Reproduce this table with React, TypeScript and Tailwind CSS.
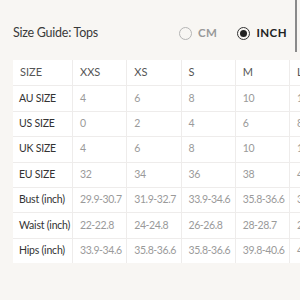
import { Fragment } from 'react'

const HEAD = ['SIZE', 'XXS', 'XS', 'S', 'M', 'L']

const ROWS: [string, string[]][] = [
  ['AU SIZE', ['4', '6', '8', '10', '12']],
  ['US SIZE', ['0', '2', '4', '6', '8']],
  ['UK SIZE', ['4', '6', '8', '10', '12']],
  ['EU SIZE', ['32', '34', '36', '38', '40']],
  ['Bust (inch)', ['29.9-30.7', '31.9-32.7', '33.9-34.6', '35.8-36.6', '37.8-38.6']],
  ['Waist (inch)', ['22-22.8', '24-24.8', '26-26.8', '28-28.7', '29.9-30.7']],
  ['Hips (inch)', ['33.9-34.6', '35.8-36.6', '35.8-36.6', '39.8-40.6', '41.7-42.5']],
]

function Radio({ label, checked }: { label: string; checked?: boolean }) {
  return (
    <div className="flex items-center gap-[6px]">
      <span
        className={`w-[13px] h-[13px] rounded-full border flex items-center justify-center ${
          checked ? 'border-[#333]' : 'border-[#b5b5b5]'
        }`}
      >
        {checked && <span className="w-[7px] h-[7px] rounded-full bg-[#222]" />}
      </span>
      <span
        className={`text-[11.5px] font-bold tracking-[0.04em] ${checked ? 'text-[#222]' : 'text-[#999]'}`}
      >
        {label}
      </span>
    </div>
  )
}

export default function App() {
  return (
    <div
      className="relative w-[300px] h-[300px] overflow-hidden bg-[#f8f6f3]"
      style={{ fontFamily: 'Lato, "Noto Sans", sans-serif' }}
    >
      <div className="absolute right-[3px] top-0 w-[2px] h-[52px] bg-[#8a8a8a]" />

      <div className="flex items-center justify-between pl-[13px] pr-[13px] pt-[24px] h-[42px]">
        <span className="text-[12.5px] tracking-[-0.02em] text-[#3a3a3a]">Size Guide: Tops</span>
        <div className="flex items-center gap-[20px]">
          <Radio label="CM" />
          <Radio label="INCH" checked />
        </div>
      </div>

      <div className="ml-[13px] mt-[18px] w-max grid grid-cols-[59px_repeat(5,53.25px)] gap-px bg-[#eeeceb]">
        {HEAD.map((h) => (
          <div key={h} className="h-[25.4px] bg-white flex items-center pl-[7px] text-[11px] text-[#555] whitespace-nowrap">
            {h}
          </div>
        ))}
        {ROWS.map(([label, vals]) => (
          <Fragment key={label}>
            <div className="h-[24.4px] bg-white flex items-center pl-[6px] text-[10.5px] tracking-[-0.02em] text-[#333] whitespace-nowrap">
              {label}
            </div>
            {vals.map((v, i) => (
              <div key={i} className="h-[24.4px] bg-white flex items-center pl-[7px] text-[10.5px] tracking-[-0.04em] text-[#9a9a9a] whitespace-nowrap">
                {v}
              </div>
            ))}
          </Fragment>
        ))}
      </div>
    </div>
  )
}
